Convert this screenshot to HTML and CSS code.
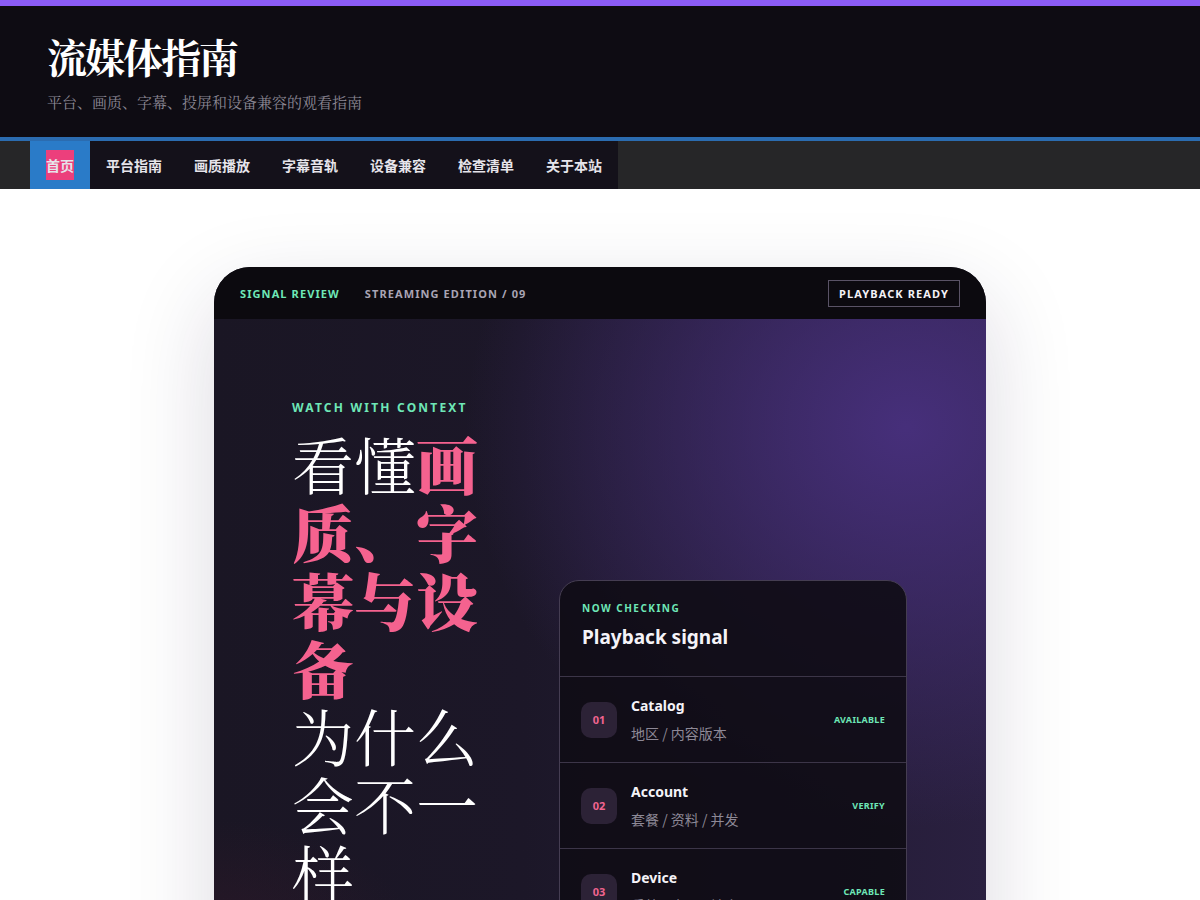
FILE: index.html
```html
<!DOCTYPE html>
<html lang="zh-CN">
<head>
    <meta charset="UTF-8">
    <meta name="viewport" content="width=device-width, initial-scale=1.0">
    <title>流媒体指南</title>
    <link rel="stylesheet" href="styles.css">
</head>
<body>
<!-- Site header -->
<header class="site-header">
    <h1 class="site-title">流媒体指南</h1>
    <p class="site-desc">平台、画质、字幕、投屏和设备兼容的观看指南</p>
</header>

<nav class="site-nav">
    <ul class="nav-list">
        <li class="nav-item active"><a href="#"><span class="mark">首页</span></a></li>
        <li class="nav-item"><a href="#">平台指南</a></li>
        <li class="nav-item"><a href="#">画质播放</a></li>
        <li class="nav-item"><a href="#">字幕音轨</a></li>
        <li class="nav-item"><a href="#">设备兼容</a></li>
        <li class="nav-item"><a href="#">检查清单</a></li>
        <li class="nav-item"><a href="#">关于本站</a></li>
    </ul>
</nav>

<!-- Feature card -->
<main class="page">
    <section class="signal-card">
        <div class="card-bar">
            <span class="brand">SIGNAL REVIEW</span>
            <span class="edition">STREAMING EDITION / 09</span>
            <span class="ready">PLAYBACK READY</span>
        </div>

        <div class="hero">
            <div class="hero-copy">
                <p class="kicker">WATCH WITH CONTEXT</p>
                <h2 class="hero-title">看懂<em>画质、字幕与设备</em><br>为什么会不一样</h2>
            </div>

            <div class="check-panel">
                <div class="panel-head">
                    <p class="panel-label">NOW CHECKING</p>
                    <h3 class="panel-title">Playback signal</h3>
                </div>
                <div class="check-row">
                    <span class="num">01</span>
                    <div class="row-text">
                        <strong>Catalog</strong>
                        <span>地区 / 内容版本</span>
                    </div>
                    <span class="status">AVAILABLE</span>
                </div>
                <div class="check-row">
                    <span class="num">02</span>
                    <div class="row-text">
                        <strong>Account</strong>
                        <span>套餐 / 资料 / 并发</span>
                    </div>
                    <span class="status">VERIFY</span>
                </div>
                <div class="check-row">
                    <span class="num">03</span>
                    <div class="row-text">
                        <strong>Device</strong>
                        <span>系统 / 应用 / 输出</span>
                    </div>
                    <span class="status">CAPABLE</span>
                </div>
            </div>
        </div>
    </section>
</main>
</body>
</html>
```

FILE: styles.css
```css
/* Base */
body {
    margin: 0;
    background: #ffffff;
    font-family: "Noto Sans", "Noto Sans CJK SC", sans-serif;
    color: #f2f0f5;
}

/* Header */
.site-header {
    background: #0e0c13;
    border-top: 6px solid #8b5cf6;
    border-bottom: 4px solid #2b6cb0;
    padding: 27px 47px 24px;
}

.site-title {
    margin: 0;
    font-family: "Noto Serif CJK SC", "Noto Sans CJK SC", serif;
    font-size: 40px;
    line-height: 46px;
    font-weight: 700;
    color: #ffffff;
    letter-spacing: -2px;
}

.site-desc {
    margin: 12px 0 0;
    font-family: "Noto Serif CJK SC", "Noto Sans CJK SC", serif;
    font-size: 15px;
    line-height: 22px;
    color: #8b8793;
}

/* Navigation */
.site-nav {
    display: flex;
    height: 48px;
    background: #262628;
    padding-left: 30px;
}

.nav-list {
    display: flex;
    margin: 0;
    padding: 0;
    list-style: none;
    background: #14111a;
}

.nav-item a {
    display: flex;
    align-items: center;
    height: 48px;
    padding: 0 16px;
    font-family: "Noto Sans CJK SC", sans-serif;
    font-size: 14px;
    font-weight: 700;
    color: #e6e4ea;
    text-decoration: none;
}

.nav-item.active a {
    background: #2a7bc8;
}

.nav-item .mark {
    background: #ec3f7c;
    padding: 5px 0;
}

/* Card */
.page {
    padding: 78px 0 80px;
}

.signal-card {
    width: 772px;
    margin: 0 auto;
    border-radius: 36px 36px 0 0;
    overflow: hidden;
    background: #1a1624;
    box-shadow: 0 30px 90px rgba(30, 20, 60, 0.16);
}

.card-bar {
    display: flex;
    align-items: center;
    height: 52px;
    padding: 0 26px;
    background: #0c0a0f;
    font-size: 11px;
    font-weight: 700;
    letter-spacing: 1.1px;
}

.brand {
    color: #6ee7b7;
}

.edition {
    margin-left: 25px;
    color: #a9a4b4;
}

.ready {
    margin-left: auto;
    padding: 5px 10px;
    border: 1px solid #5a5366;
    color: #f4f2f7;
}

/* Hero */
.hero {
    display: grid;
    grid-template-columns: 1fr 348px;
    gap: 64px;
    padding: 80px 79px 60px 78px;
    background:
        radial-gradient(ellipse 440px 400px at 692px 108px, rgba(72, 48, 126, 0.95), rgba(72, 48, 126, 0) 100%),
        radial-gradient(ellipse 200px 120px at 0 620px, rgba(90, 30, 50, 0.22), rgba(90, 30, 50, 0) 100%),
        linear-gradient(90deg, #1a1624 0%, #1c1728 40%, #2a2040 100%);
}

.kicker {
    margin: 0 0 14px;
    font-size: 12px;
    font-weight: 700;
    letter-spacing: 2.2px;
    color: #6ee7b7;
}

.hero-title {
    margin: 0;
    max-width: 200px;
    font-family: "Noto Serif CJK SC", "Liberation Serif", serif;
    font-size: 62px;
    line-height: 68px;
    font-weight: 300;
    color: #ffffff;
}

.hero-title em {
    font-style: normal;
    font-weight: 900;
    color: #f5628f;
}

/* Check panel */
.check-panel {
    margin-top: 181px;
    border: 1px solid #453d52;
    border-radius: 20px 20px 0 0;
    background: rgba(16, 12, 21, 0.9);
}

.panel-head {
    padding: 20px 22px 25px;
    border-bottom: 1px solid #3c3548;
}

.panel-label {
    margin: 0 0 8px;
    font-size: 10px;
    font-weight: 700;
    letter-spacing: 1.5px;
    color: #6ee7b7;
}

.panel-title {
    margin: 0;
    font-size: 19px;
    line-height: 28px;
    font-weight: 700;
    color: #f5f3f8;
}

.check-row {
    display: flex;
    align-items: center;
    gap: 14px;
    height: 85px;
    padding: 0 21px;
    border-bottom: 1px solid #3c3548;
}

.num {
    display: flex;
    align-items: center;
    justify-content: center;
    width: 36px;
    height: 36px;
    border-radius: 10px;
    background: #2c2236;
    font-size: 11px;
    font-weight: 700;
    color: #f0648f;
}

.row-text {
    display: flex;
    flex-direction: column;
    gap: 7px;
    flex: 1;
}

.row-text strong {
    font-size: 14px;
    line-height: 20px;
    color: #f5f3f8;
}

.row-text span {
    font-family: "Noto Sans CJK SC", sans-serif;
    font-size: 14px;
    line-height: 20px;
    color: #8d8896;
}

.status {
    font-size: 9px;
    font-weight: 700;
    letter-spacing: 0.3px;
    color: #6ee7b7;
}
```
